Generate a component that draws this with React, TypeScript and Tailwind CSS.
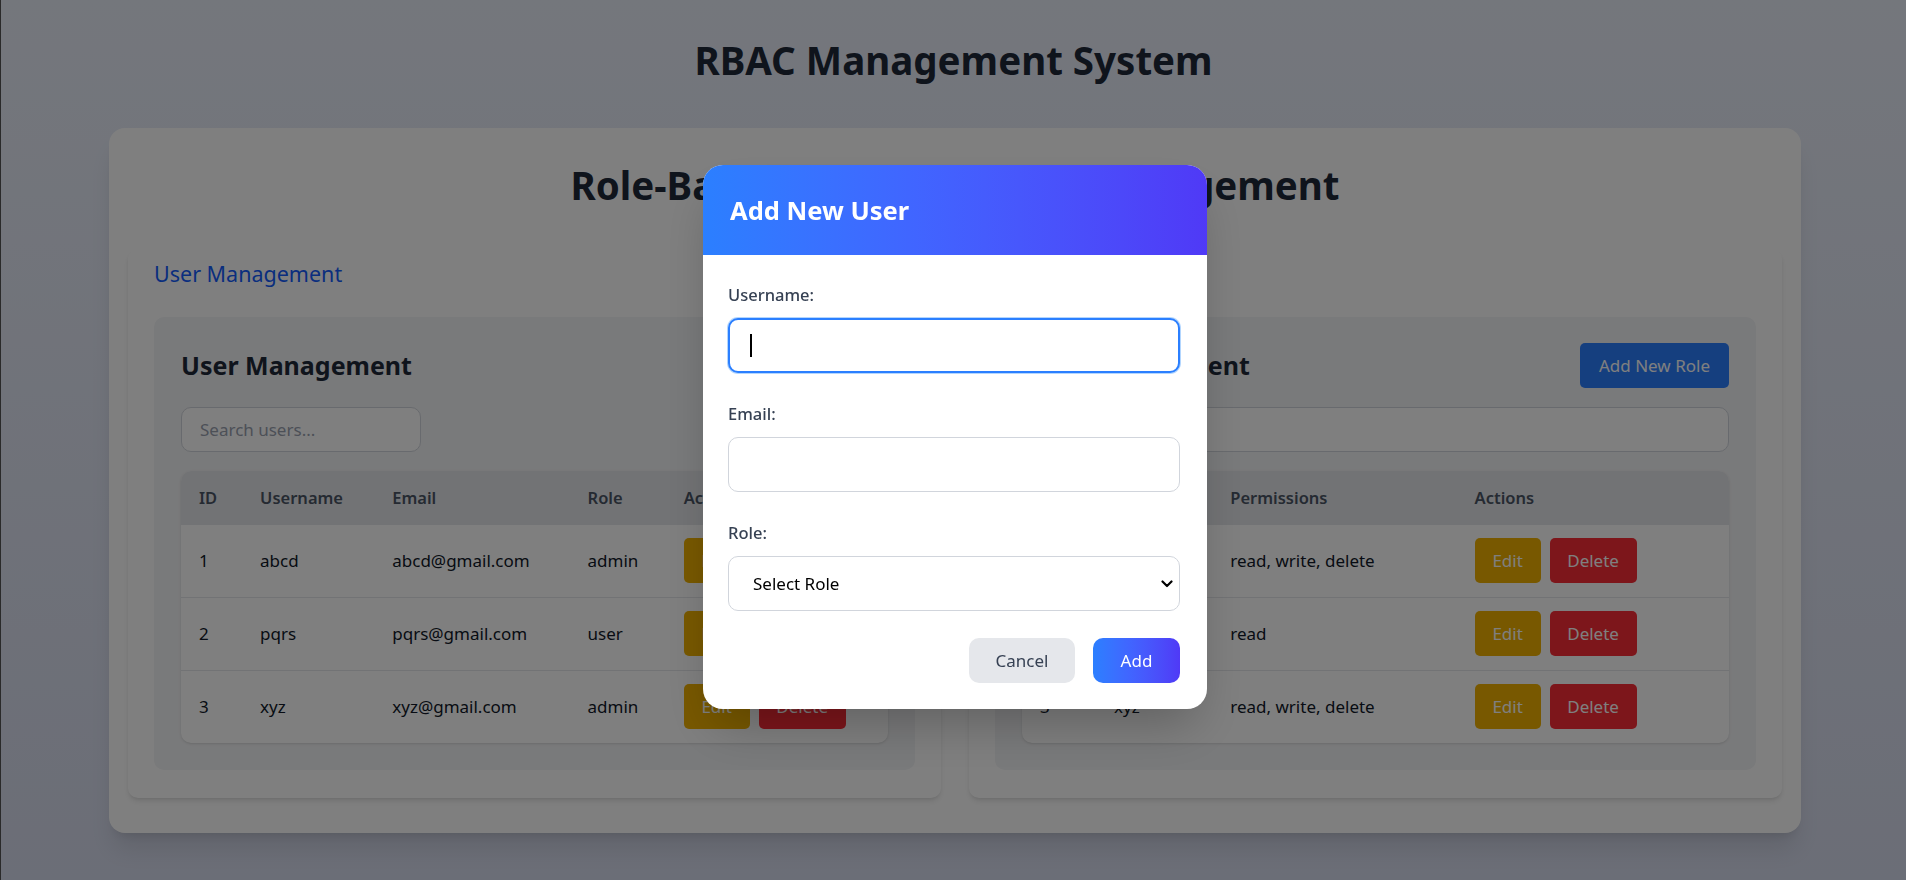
import React from "react";

const users = [
  { id: 1, username: "abcd", email: "abcd@gmail.com", role: "admin" },
  { id: 2, username: "pqrs", email: "pqrs@gmail.com", role: "user" },
  { id: 3, username: "xyz", email: "xyz@gmail.com", role: "admin" },
];

const roles = [
  { id: 1, name: "admin", permissions: "read, write, delete" },
  { id: 2, name: "user", permissions: "read" },
  { id: 3, name: "xyz", permissions: "read, write, delete" },
];

function RowActions() {
  return (
    <div className="flex items-center">
      <button className="h-[45px] w-[66px] rounded-[5px] bg-yellow-500 text-[17px] text-white">Edit</button>
      <button className="ml-[9px] h-[45px] w-[87px] rounded-[5px] bg-red-500 text-[17px] text-white">Delete</button>
    </div>
  );
}

function UserPanel() {
  return (
    <div className="rounded-[10px] bg-white px-[26px] pb-[28px] pt-[10px] shadow-md">
      <div className="mb-[28px] text-[21.5px] leading-[30px] text-blue-600">User Management</div>
      <div className="rounded-[10px] bg-gray-100 px-[27px] pb-[27px] pt-[26px]">
        <div className="flex h-[45px] items-center justify-between">
          <h2 className="text-[25px] font-bold text-gray-800">User Management</h2>
        </div>
        <input
          className="mt-[19px] block h-[45px] w-[240px] rounded-[10px] border border-gray-300 bg-white px-[18px] text-[17px] placeholder:text-gray-400"
          placeholder="Search users..."
          readOnly
        />
        <div className="mt-[19px] overflow-hidden rounded-[10px] bg-white shadow-sm">
          <table className="w-full table-fixed border-collapse text-left text-[17px]">
            <colgroup>
              <col className="w-[61px]" />
              <col className="w-[132px]" />
              <col className="w-[195px]" />
              <col className="w-[96px]" />
              <col className="w-[222px]" />
            </colgroup>
            <thead>
              <tr className="h-[54px] bg-gray-200 text-[16.5px] text-gray-600">
                <th className="pl-[18px] font-semibold">ID</th>
                <th className="pl-[18px] font-semibold">Username</th>
                <th className="pl-[18px] font-semibold">Email</th>
                <th className="pl-[18px] font-semibold">Role</th>
                <th className="pl-[18px] font-semibold">Actions</th>
              </tr>
            </thead>
            <tbody className="text-gray-900">
              {users.map((u, i) => (
                <tr key={u.id} className={i === 0 ? "h-[72px]" : "h-[73px] border-t border-gray-200"}>
                  <td className="pl-[18px]">{u.id}</td>
                  <td className="pl-[18px]">{u.username}</td>
                  <td className="pl-[18px]">{u.email}</td>
                  <td className="pl-[18px]">{u.role}</td>
                  <td className="pl-[18px]">
                    <RowActions />
                  </td>
                </tr>
              ))}
            </tbody>
          </table>
        </div>
      </div>
    </div>
  );
}

function RolePanel() {
  return (
    <div className="rounded-[10px] bg-white px-[26px] pb-[28px] pt-[10px] shadow-md">
      <div className="mb-[28px] text-[21.5px] leading-[30px] text-blue-600">Role Management</div>
      <div className="rounded-[10px] bg-gray-100 px-[27px] pb-[27px] pt-[26px]">
        <div className="flex h-[45px] items-center justify-between">
          <h2 className="text-[25px] font-bold text-gray-800">Role Management</h2>
          <button className="h-[45px] w-[149px] rounded-[5px] bg-blue-500 text-[17px] text-white">Add New Role</button>
        </div>
        <input
          className="mt-[19px] block h-[45px] w-full rounded-[10px] border border-gray-300 bg-white px-[18px] text-[17px] placeholder:text-gray-400"
          placeholder="Search roles..."
          readOnly
        />
        <div className="mt-[19px] overflow-hidden rounded-[10px] bg-white shadow-sm">
          <table className="w-full table-fixed border-collapse text-left text-[17px]">
            <colgroup>
              <col className="w-[74px]" />
              <col className="w-[116px]" />
              <col className="w-[244px]" />
              <col className="w-[272px]" />
            </colgroup>
            <thead>
              <tr className="h-[54px] bg-gray-200 text-[16.5px] text-gray-600">
                <th className="pl-[18px] font-semibold">ID</th>
                <th className="pl-[18px] font-semibold">Name</th>
                <th className="pl-[18px] font-semibold">Permissions</th>
                <th className="pl-[18px] font-semibold">Actions</th>
              </tr>
            </thead>
            <tbody className="text-gray-900">
              {roles.map((r, i) => (
                <tr key={r.id} className={i === 0 ? "h-[72px]" : "h-[73px] border-t border-gray-200"}>
                  <td className="pl-[18px]">{r.id}</td>
                  <td className="pl-[18px]">{r.name}</td>
                  <td className="pl-[18px]">{r.permissions}</td>
                  <td className="pl-[18px]">
                    <RowActions />
                  </td>
                </tr>
              ))}
            </tbody>
          </table>
        </div>
      </div>
    </div>
  );
}

function Modal() {
  return (
    <div className="fixed inset-0 flex items-center justify-center bg-black/50 pb-[6px] pl-[4px]">
      <div className="w-[504px] overflow-hidden rounded-[20px] bg-white shadow-2xl">
        <div className="flex h-[90px] items-center bg-linear-to-r from-blue-500 to-indigo-600 px-[27px]">
          <h3 className="text-[25.5px] font-bold text-white">Add New User</h3>
        </div>
        <div className="pb-[26px] pl-[25px] pr-[27px] pt-[28px]">
          <div className="mb-[29px]">
            <label className="mb-[11px] block text-[16.5px] font-medium leading-[24px] text-gray-700">Username:</label>
            <div className="relative">
              <input
                className="block h-[55px] w-full rounded-[10px] border-2 border-blue-500 bg-white px-[20px] text-[17px] caret-transparent shadow-[0_0_0_1px_rgba(147,197,253,0.7)] outline-none"
                readOnly
              />
              <span className="absolute left-[22px] top-[16px] h-[23px] w-[2px] bg-black" />
            </div>
          </div>
          <div className="mb-[29px]">
            <label className="mb-[11px] block text-[16.5px] font-medium leading-[24px] text-gray-700">Email:</label>
            <input className="block h-[55px] w-full rounded-[10px] border border-gray-300 bg-white px-[20px] text-[17px] outline-none" readOnly />
          </div>
          <div>
            <label className="mb-[11px] block text-[16.5px] font-medium leading-[24px] text-gray-700">Role:</label>
            <div className="relative">
              <select className="block h-[55px] w-full appearance-none rounded-[10px] border border-gray-300 bg-white pl-[24px] text-[17px] text-black outline-none">
                <option>Select Role</option>
                <option>admin</option>
                <option>user</option>
              </select>
              <svg
                className="pointer-events-none absolute right-[7px] top-[24px]"
                width="12"
                height="8"
                viewBox="0 0 12 8"
                fill="none"
              >
                <polyline points="1.5,1.5 6,6 10.5,1.5" stroke="#000" strokeWidth="2.2" strokeLinecap="round" strokeLinejoin="round" />
              </svg>
            </div>
          </div>
          <div className="mt-[27px] flex justify-end gap-[18px]">
            <button className="h-[45px] w-[106px] rounded-[10px] bg-gray-200 text-[17px] text-gray-700">Cancel</button>
            <button className="h-[45px] w-[87px] rounded-[10px] bg-linear-to-r from-blue-500 to-indigo-600 text-[17px] text-white">Add</button>
          </div>
        </div>
      </div>
    </div>
  );
}

export default function App() {
  return (
    <div className="relative min-h-screen w-full border-l border-[#555] bg-linear-to-b from-[#e9eef9] to-[#d7dcee] pt-[38px] font-['Noto_Sans',sans-serif]">
      <h1 className="text-center text-[38.5px] font-bold leading-[45px] text-gray-800">RBAC Management System</h1>
      <div className="ml-[108px] mt-[45px] w-[1692px] rounded-[16px] bg-white px-[19px] py-[35px] shadow-xl">
        <h2 className="text-center text-[38.5px] font-bold leading-[45px] text-gray-800">Role-Based Access Control Management</h2>
        <div className="mt-[41px] grid grid-cols-2 gap-[28px]">
          <UserPanel />
          <RolePanel />
        </div>
      </div>
      <Modal />
    </div>
  );
}
